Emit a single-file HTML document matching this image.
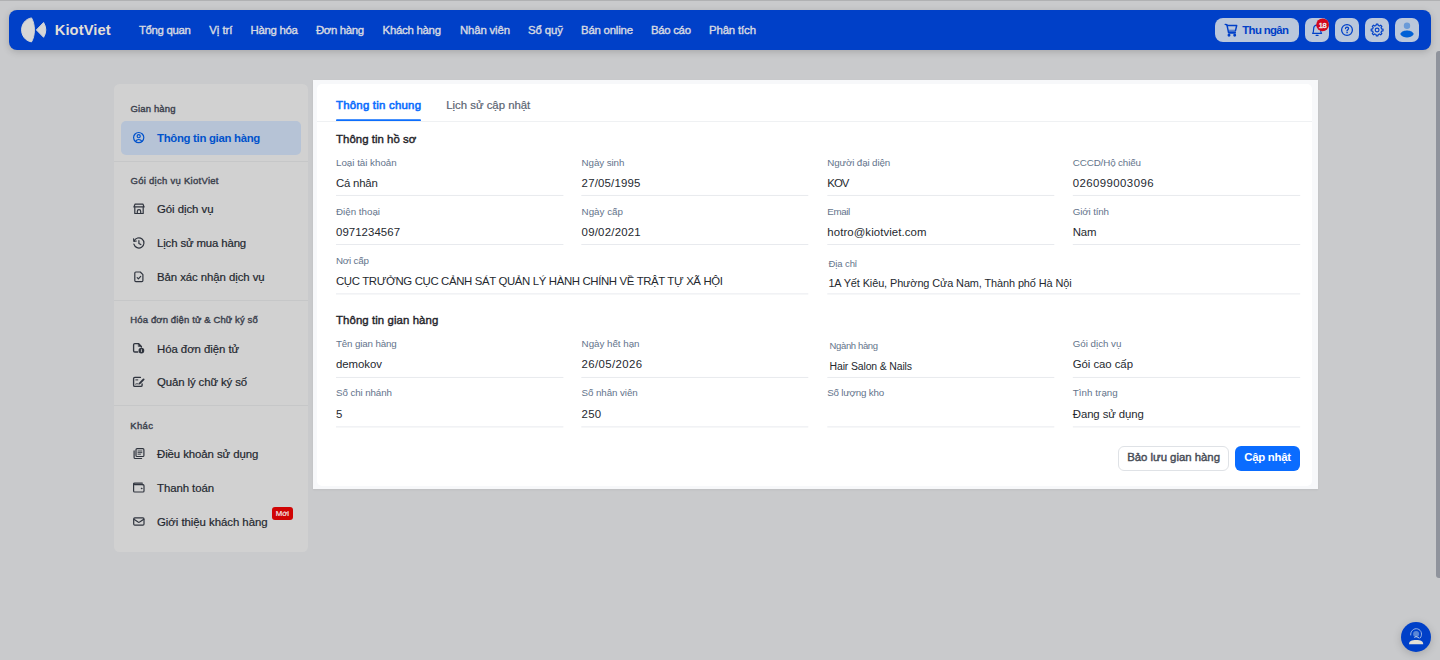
<!DOCTYPE html>
<html lang="vi"><head><meta charset="utf-8"><title>KiotViet - Thông tin gian hàng</title>
<style>
*{box-sizing:border-box;margin:0;padding:0}
html,body{width:1440px;height:660px;overflow:hidden}
body{position:relative;background:#c9cacc;font-family:"Liberation Sans",sans-serif}
.t{position:absolute;white-space:nowrap;line-height:1}
.abs{position:absolute;display:block}
.topline{left:0;top:0;width:1440px;height:1px;background:#b0b1b3}
.nav{left:9px;top:9.5px;width:1422px;height:40.5px;border-radius:8px;background:#0040c8;box-shadow:0 2px 7px rgba(0,0,0,.17)}
.nbtn{top:18px;height:24px;width:24px;border-radius:7px;background:#bac7db}
.side{left:114.4px;top:83.9px;width:193.3px;height:468.3px;border-radius:5.5px;background:#d1d1d1}
.sel{left:121px;top:121.3px;width:180.3px;height:33.6px;border-radius:5px;background:#b6c3d6}
.sdiv{left:114.4px;width:193.3px;height:1px;background:#c6c7c8}
.spot{left:312.5px;top:79.5px;width:1005.3px;height:409.5px;background:#f7f8fa;box-shadow:0 1px 2px rgba(0,0,0,.06)}
.card{left:317px;top:84px;width:995.4px;height:401.5px;border-radius:5px;background:#fff}
.tabline{left:317px;top:121px;width:995.4px;height:1px;background:#eff1f3}
.btn1{left:1117.8px;top:445.6px;width:111.2px;height:25px;border-radius:6px;border:1px solid #dfe2e6;background:#fff}
.btn2{left:1235.2px;top:445.6px;width:65px;height:25px;border-radius:6px;background:#0a6cff}
.sb{left:1436px;top:50.5px;width:5px;height:527px;border-radius:3px 0 0 3px;background:#8f939c}
.chat{left:1401px;top:621.5px;width:30px;height:30px;border-radius:50%;background:#0040c8;box-shadow:0 2px 8px rgba(0,0,0,.18)}
.moi{left:272.3px;top:507px;width:20.5px;height:12.8px;border-radius:3px;background:#d00404}
</style></head><body>
<div class="abs topline"></div>
<nav class="abs nav"></nav>
<svg class="abs" style="left:19px;top:15px" width="30" height="30" viewBox="19 15 30 30">
<path d="M31.5 17.9 C24.8 19.1 21.6 24.7 21.6 29.9 C21.6 35.1 24.8 40.7 31.5 41.9 C33.3 38.8 34.4 34.6 34.4 29.9 C34.4 25.2 33.3 21 31.5 17.9Z" fill="#d6d6d6" stroke="#d6d6d6" stroke-width="1" stroke-linejoin="round"/>
<path d="M36.4 29.9 L43.6 22.5 Q48 29.9 43.6 37.3Z" fill="#d6d6d6" stroke="#d6d6d6" stroke-width="1" stroke-linejoin="round"/>
</svg>
<div class="abs nbtn" style="left:1215px;width:83.8px;border-radius:8px"></div>
<div class="abs nbtn" style="left:1305px"></div>
<div class="abs nbtn" style="left:1335px"></div>
<div class="abs nbtn" style="left:1365px"></div>
<div class="abs nbtn" style="left:1395px"></div>

<aside class="abs side"></aside>
<div class="abs sel"></div>
<div class="abs sdiv" style="top:161px"></div>
<div class="abs sdiv" style="top:300.2px"></div>
<div class="abs sdiv" style="top:405.4px"></div>
<div class="abs moi"></div>
<div class="abs spot"></div>
<main class="abs card"></main>
<div class="abs tabline"></div>
<!--UL0--><svg class="abs" style="left:0;top:0" width="1440" height="660" viewBox="0 0 1440 660"><rect x="336.0" y="194.95" width="227.4" height="1" fill="#e8eaee"/><rect x="581.3" y="194.95" width="227.0" height="1" fill="#e8eaee"/><rect x="827.3" y="194.95" width="227.0" height="1" fill="#e8eaee"/><rect x="1072.8" y="194.95" width="227.4" height="1" fill="#e8eaee"/><rect x="336.0" y="244.00" width="227.4" height="1" fill="#e8eaee"/><rect x="581.3" y="244.00" width="227.0" height="1" fill="#e8eaee"/><rect x="827.3" y="244.00" width="227.0" height="1" fill="#e8eaee"/><rect x="1072.8" y="244.00" width="227.4" height="1" fill="#e8eaee"/><rect x="336.0" y="293.40" width="472.3" height="1" fill="#e8eaee"/><rect x="827.3" y="293.40" width="472.9" height="1" fill="#e8eaee"/><rect x="336.0" y="376.95" width="227.4" height="1" fill="#e8eaee"/><rect x="581.3" y="376.95" width="227.0" height="1" fill="#e8eaee"/><rect x="827.3" y="376.95" width="227.0" height="1" fill="#e8eaee"/><rect x="1072.8" y="376.95" width="227.4" height="1" fill="#e8eaee"/><rect x="336.0" y="426.40" width="227.4" height="1" fill="#e8eaee"/><rect x="581.3" y="426.40" width="227.0" height="1" fill="#e8eaee"/><rect x="827.3" y="426.40" width="227.0" height="1" fill="#e8eaee"/><rect x="1072.8" y="426.40" width="227.4" height="1" fill="#e8eaee"/><rect x="336" y="119.25" width="85" height="1.8" rx=".9" fill="#0d6efd"/></svg><!--UL1-->
<div class="abs btn1"></div>
<div class="abs btn2"></div>
<div class="abs sb"></div>
<div class="abs chat"></div>
<!--IC0--><svg class="abs" style="left:0;top:0" width="1440" height="660" viewBox="0 0 1440 660" fill="none" stroke-linecap="round" stroke-linejoin="round">
<defs><linearGradient id="cg" x1="0" y1="0" x2="0" y2="1"><stop offset="0" stop-color="#0040c8" stop-opacity=".35"/><stop offset="1" stop-color="#0040c8"/></linearGradient></defs>
<!-- cart -->
<g stroke="#0040c8" stroke-width="1.45">
<path d="M1225.2 24.4 L1226.9 24.7 L1228.6 32.8 L1235.3 32.8"/>
<path d="M1227.2 25.5 L1236.7 25.5 L1235.5 30.6"/>
<path d="M1228.1 29.4 L1236 29.4 L1235.5 33.4 L1228.9 33.4Z" fill="url(#cg)" stroke="none"/>
<circle cx="1229" cy="35.3" r=".75" fill="#0040c8"/><circle cx="1234.7" cy="35.3" r=".75" fill="#0040c8"/>
</g>
<!-- bell -->
<g stroke="#0040c8" stroke-width="1.2">
<path d="M1312.6 33.3 C1313.6 32.2 1313.6 30.6 1313.6 29.2 C1313.6 26.9 1315.2 25.2 1317.1 25.2 C1319 25.2 1320.6 26.9 1320.6 29.2 C1320.6 30.6 1320.6 32.2 1321.6 33.3Z"/>
<path d="M1316.1 35.3 L1318.1 35.3"/>
</g>
<circle cx="1322.6" cy="24.8" r="6.4" fill="#d4081c"/>
<!-- help -->
<g stroke="#0040c8" stroke-width="1.25">
<circle cx="1347" cy="30" r="5.4"/>
<path d="M1345.5 28.6 C1345.5 27.6 1346.2 27.1 1347 27.1 C1347.9 27.1 1348.6 27.7 1348.6 28.5 C1348.6 29.6 1347 29.7 1347 30.9"/>
<circle cx="1347" cy="32.7" r=".45" fill="#0040c8" stroke-width=".5"/>
</g>
<!-- gear -->
<g stroke="#0040c8" stroke-width="1.15">
<path d="M1376.03 25.53 L1376.25 24.06 L1377.95 24.06 L1378.17 25.53 L1379.50 26.08 L1380.70 25.20 L1381.90 26.40 L1381.02 27.60 L1381.57 28.93 L1383.04 29.15 L1383.04 30.85 L1381.57 31.07 L1381.02 32.40 L1381.90 33.60 L1380.70 34.80 L1379.50 33.92 L1378.17 34.47 L1377.95 35.94 L1376.25 35.94 L1376.03 34.47 L1374.70 33.92 L1373.50 34.80 L1372.30 33.60 L1373.18 32.40 L1372.63 31.07 L1371.16 30.85 L1371.16 29.15 L1372.63 28.93 L1373.18 27.60 L1372.30 26.40 L1373.50 25.20 L1374.70 26.08Z"/>
<circle cx="1377.1" cy="30" r="1.9"/>
</g>
<!-- avatar -->
<circle cx="1407" cy="25.7" r="3.2" fill="#6a9ad8"/>
<path d="M1400.2 34 C1401.8 30.9 1404.5 30.4 1407 30.4 C1409.5 30.4 1412.2 30.9 1413.8 34 C1412.2 36.9 1409.5 37.4 1407 37.4 C1404.5 37.4 1401.8 36.9 1400.2 34Z" fill="#0060d6"/>
<!-- sidebar: user circle -->
<g stroke="#0052cc" stroke-width="1.2">
<circle cx="138.7" cy="137.6" r="5.1"/>
<circle cx="138.7" cy="136.2" r="1.55"/>
<path d="M135.6 141.4 C136.4 139.9 137.5 139.5 138.7 139.5 C139.9 139.5 141 139.9 141.8 141.4"/>
</g>
<g stroke="#30353f" stroke-width="1.2">
<!-- store -->
<path d="M135.1 204.1 L142.9 204.1 L144.1 206.9 L133.9 206.9Z"/>
<path d="M134.8 207.4 L134.8 213.5 L143.2 213.5 L143.2 207.4"/>
<path d="M137.3 213.4 L137.3 211.4 A1.7 1.7 0 0 1 140.7 211.4 L140.7 213.4"/>
<!-- history -->
<g transform="translate(0 .6)"><path d="M134.1 240.4 A5.1 5.1 0 1 1 133.9 243.6"/>
<path d="M133.6 238.3 L133.9 240.7 L136.3 240.4"/>
<path d="M138.9 239.9 L138.9 242.8 L140.8 244"/></g>
<!-- doc check -->
<path d="M135.9 272 L140.3 272 L142.9 274.6 L142.9 280.5 C142.9 281.2 142.5 281.6 141.8 281.6 L135.9 281.6 C135.2 281.6 134.8 281.2 134.8 280.5 L134.8 273.1 C134.8 272.4 135.2 272 135.9 272Z"/>
<path d="M137.2 277.7 L138.4 278.9 L140.7 276.4"/>
<!-- invoice -->
<g stroke-width="1.35">
<path d="M137.8 352 L134.8 352 C134.1 352 133.6 351.5 133.6 350.8 L133.6 344.8 C133.6 344.1 134.1 343.6 134.8 343.6 L138.5 343.6 L141.4 346.4 L141.4 347"/>
<path d="M138.6 343.8 L141.2 346.4 L138.6 346.4Z" fill="#2b3039" stroke-width=".6"/>
<circle cx="141.4" cy="350.6" r="2.2" fill="#2b3039"/>
<path d="M141.4 349.6 L141.4 351.6" stroke="#c9c9c9" stroke-width=".9"/>
</g>
<!-- signature -->
<g stroke-width="1.35">
<path d="M142.1 384 L142.1 385.2 C142.1 385.9 141.6 386.4 140.9 386.4 L134.8 386.4 C134.1 386.4 133.6 385.9 133.6 385.2 L133.6 378.6 C133.6 377.9 134.1 377.4 134.8 377.4 L140.4 377.4"/>
<path d="M143.6 379.4 L140.2 382.8" stroke-width="1.9"/>
<path d="M139.9 383.1 L139 384 " stroke-width="1.2"/>
<path d="M135.8 379.9 L137.8 379.9 M135.6 384 C136.3 383.2 137 384.3 137.9 383.7" stroke-width="1"/>
</g>
<!-- terms -->
<path d="M137.1 448.7 L142.8 448.7 C143.5 448.7 143.9 449.1 143.9 449.8 L143.9 455.4 C143.9 456.1 143.5 456.5 142.8 456.5 L137.1 456.5 C136.4 456.5 136 456.1 136 455.4 L136 449.8 C136 449.1 136.4 448.7 137.1 448.7Z"/>
<path d="M138 451 L141.9 451 M138 452.6 L141.9 452.6 M138 454.2 L140.5 454.2" stroke-width=".9"/>
<path d="M134.1 450.9 L134.1 457.4 C134.1 458.1 134.5 458.5 135.2 458.5 L141.6 458.5"/>
<!-- wallet -->
<g transform="translate(0 .4)"><path d="M142.9 484.3 L134.8 484.3 C134.1 484.3 133.6 483.9 133.6 483.5 C133.6 483.1 134.1 482.8 134.8 482.8 L142.3 482.8"/>
<path d="M133.6 483.5 L133.6 490.5 C133.6 491.2 134 491.6 134.7 491.6 L142.9 491.6 C143.6 491.6 144 491.2 144 490.5 L144 485.4 C144 484.7 143.6 484.3 142.9 484.3"/>
<circle cx="141.6" cy="488" r=".5" fill="#2b3039" stroke-width=".5"/>
</g>
<!-- mail -->
<path d="M134.8 517.8 L142.9 517.8 C143.6 517.8 144 518.2 144 518.9 L144 524.1 C144 524.8 143.6 525.2 142.9 525.2 L134.8 525.2 C134.1 525.2 133.7 524.8 133.7 524.1 L133.7 518.9 C133.7 518.2 134.1 517.8 134.8 517.8Z"/>
<path d="M133.9 519.3 L138.1 522.1 C138.6 522.4 139.1 522.4 139.6 522.1 L143.8 519.3"/>
</g>
<!-- chat icon -->
<g transform="translate(1416.1 636.6)">
<path d="M-7.1 7.7 C-7.1 4.6 -4.6 3.4 0 3.4 C4.6 3.4 7.1 4.6 7.1 7.7Z" fill="#e4e0d6"/>
<circle cx="0" cy="-2.5" r="3" fill="#5a86d6"/>
<path d="M-5.4 -1.6 A5.5 5.5 0 1 1 4.2 1.2" stroke="#a9c0e8" stroke-width=".9"/>
<path d="M-1.4 0.7 C-.6 -.1 .8 -.1 1.6 .7 L3 1.4" stroke="#dfe3ea" stroke-width=".9"/>
</g>
</svg>
<!--IC1-->
<div class="t" style="left:54.70px;top:22.79px;font-size:14.72px;font-weight:700;color:#e2dfd7;letter-spacing:0.094px;">KiotViet</div>
<div class="t" style="left:138.90px;top:24.61px;font-size:11.40px;font-weight:400;color:#d6d9e2;letter-spacing:-0.321px;-webkit-text-stroke:0.4px;">Tổng quan</div>
<div class="t" style="left:209.30px;top:24.61px;font-size:11.40px;font-weight:400;color:#d6d9e2;letter-spacing:-0.064px;-webkit-text-stroke:0.4px;">Vị trí</div>
<div class="t" style="left:250.60px;top:24.61px;font-size:11.40px;font-weight:400;color:#d6d9e2;letter-spacing:-0.315px;-webkit-text-stroke:0.4px;">Hàng hóa</div>
<div class="t" style="left:316.00px;top:24.61px;font-size:11.40px;font-weight:400;color:#d6d9e2;letter-spacing:-0.364px;-webkit-text-stroke:0.4px;">Đơn hàng</div>
<div class="t" style="left:382.60px;top:24.61px;font-size:11.40px;font-weight:400;color:#d6d9e2;letter-spacing:-0.268px;-webkit-text-stroke:0.4px;">Khách hàng</div>
<div class="t" style="left:460.00px;top:24.61px;font-size:11.40px;font-weight:400;color:#d6d9e2;letter-spacing:-0.162px;-webkit-text-stroke:0.4px;">Nhân viên</div>
<div class="t" style="left:528.00px;top:24.61px;font-size:11.40px;font-weight:400;color:#d6d9e2;letter-spacing:-0.094px;-webkit-text-stroke:0.4px;">Sổ quỹ</div>
<div class="t" style="left:581.00px;top:24.61px;font-size:11.40px;font-weight:400;color:#d6d9e2;letter-spacing:-0.205px;-webkit-text-stroke:0.4px;">Bán online</div>
<div class="t" style="left:651.00px;top:24.61px;font-size:11.40px;font-weight:400;color:#d6d9e2;letter-spacing:-0.302px;-webkit-text-stroke:0.4px;">Báo cáo</div>
<div class="t" style="left:709.00px;top:24.61px;font-size:11.40px;font-weight:400;color:#d6d9e2;letter-spacing:-0.143px;-webkit-text-stroke:0.4px;">Phân tích</div>
<div class="t" style="left:1242.30px;top:25.11px;font-size:11.40px;font-weight:700;color:#0040c8;letter-spacing:-0.650px;">Thu ngân</div>
<div class="t" style="left:1318.70px;top:22.32px;font-size:7.50px;font-weight:400;color:#ececec;letter-spacing:-0.344px;-webkit-text-stroke:0.4px;">18</div>
<div class="t" style="left:130.50px;top:104.12px;font-size:9.50px;font-weight:400;color:#3c424e;letter-spacing:0.145px;-webkit-text-stroke:0.4px;">Gian hàng</div>
<div class="t" style="left:157.00px;top:133.11px;font-size:11.40px;font-weight:700;color:#0052cc;letter-spacing:-0.307px;">Thông tin gian hàng</div>
<div class="t" style="left:130.50px;top:176.03px;font-size:9.50px;font-weight:400;color:#3c424e;letter-spacing:0.277px;-webkit-text-stroke:0.4px;">Gói dịch vụ KiotViet</div>
<div class="t" style="left:157.00px;top:203.51px;font-size:11.40px;font-weight:400;color:#23272f;letter-spacing:-0.048px;-webkit-text-stroke:0.2px;">Gói dịch vụ</div>
<div class="t" style="left:157.00px;top:237.51px;font-size:11.40px;font-weight:400;color:#23272f;letter-spacing:-0.135px;-webkit-text-stroke:0.2px;">Lịch sử mua hàng</div>
<div class="t" style="left:157.00px;top:271.51px;font-size:11.40px;font-weight:400;color:#23272f;letter-spacing:-0.064px;-webkit-text-stroke:0.2px;">Bản xác nhận dịch vụ</div>
<div class="t" style="left:130.30px;top:315.23px;font-size:9.50px;font-weight:400;color:#3c424e;letter-spacing:0.133px;-webkit-text-stroke:0.4px;">Hóa đơn điện tử &amp; Chữ ký số</div>
<div class="t" style="left:157.00px;top:344.01px;font-size:11.40px;font-weight:400;color:#23272f;letter-spacing:-0.047px;-webkit-text-stroke:0.2px;">Hóa đơn điện tử</div>
<div class="t" style="left:157.00px;top:376.51px;font-size:11.40px;font-weight:400;color:#23272f;letter-spacing:-0.102px;-webkit-text-stroke:0.2px;">Quản lý chữ ký số</div>
<div class="t" style="left:130.30px;top:420.83px;font-size:9.50px;font-weight:400;color:#3c424e;letter-spacing:0.348px;-webkit-text-stroke:0.4px;">Khác</div>
<div class="t" style="left:157.00px;top:448.71px;font-size:11.40px;font-weight:400;color:#23272f;letter-spacing:-0.078px;-webkit-text-stroke:0.2px;">Điều khoản sử dụng</div>
<div class="t" style="left:157.00px;top:482.51px;font-size:11.40px;font-weight:400;color:#23272f;letter-spacing:-0.060px;-webkit-text-stroke:0.2px;">Thanh toán</div>
<div class="t" style="left:157.00px;top:516.51px;font-size:11.40px;font-weight:400;color:#23272f;letter-spacing:-0.036px;-webkit-text-stroke:0.2px;">Giới thiệu khách hàng</div>
<div class="t" style="left:275.80px;top:510.38px;font-size:7.79px;font-weight:400;color:#f0e6e6;letter-spacing:-0.064px;-webkit-text-stroke:0.2px;">Mới</div>
<div class="t" style="left:336.00px;top:100.01px;font-size:11.40px;font-weight:400;color:#0d6efd;letter-spacing:0.235px;-webkit-text-stroke:0.6px;">Thông tin chung</div>
<div class="t" style="left:446.20px;top:100.01px;font-size:11.40px;font-weight:400;color:#5b6472;letter-spacing:-0.010px;-webkit-text-stroke:0.2px;">Lịch sử cập nhật</div>
<div class="t" style="left:336.00px;top:133.91px;font-size:11.40px;font-weight:400;color:#1f2329;letter-spacing:0.045px;-webkit-text-stroke:0.4px;">Thông tin hồ sơ</div>
<div class="t" style="left:336.00px;top:158.48px;font-size:9.79px;font-weight:400;color:#64748b;letter-spacing:-0.017px;">Loại tài khoản</div>
<div class="t" style="left:336.00px;top:178.31px;font-size:11.40px;font-weight:400;color:#25292f;letter-spacing:-0.213px;">Cá nhân</div>
<div class="t" style="left:581.60px;top:158.48px;font-size:9.79px;font-weight:400;color:#64748b;letter-spacing:-0.088px;">Ngày sinh</div>
<div class="t" style="left:581.60px;top:178.31px;font-size:11.40px;font-weight:400;color:#25292f;letter-spacing:0.198px;">27/05/1995</div>
<div class="t" style="left:827.30px;top:158.48px;font-size:9.79px;font-weight:400;color:#64748b;letter-spacing:-0.133px;">Người đại diện</div>
<div class="t" style="left:827.30px;top:178.31px;font-size:11.40px;font-weight:400;color:#25292f;letter-spacing:-1.000px;">KOV</div>
<div class="t" style="left:1072.80px;top:158.48px;font-size:9.79px;font-weight:400;color:#64748b;letter-spacing:-0.115px;">CCCD/Hộ chiếu</div>
<div class="t" style="left:1072.80px;top:178.31px;font-size:11.40px;font-weight:400;color:#25292f;letter-spacing:0.424px;">026099003096</div>
<div class="t" style="left:336.00px;top:207.48px;font-size:9.79px;font-weight:400;color:#64748b;letter-spacing:-0.005px;">Điện thoại</div>
<div class="t" style="left:336.00px;top:227.31px;font-size:11.40px;font-weight:400;color:#25292f;letter-spacing:0.071px;">0971234567</div>
<div class="t" style="left:581.60px;top:207.48px;font-size:9.79px;font-weight:400;color:#64748b;letter-spacing:0.010px;">Ngày cấp</div>
<div class="t" style="left:581.60px;top:227.31px;font-size:11.40px;font-weight:400;color:#25292f;letter-spacing:0.232px;">09/02/2021</div>
<div class="t" style="left:827.30px;top:207.48px;font-size:9.79px;font-weight:400;color:#64748b;letter-spacing:-0.392px;">Email</div>
<div class="t" style="left:827.30px;top:227.31px;font-size:11.40px;font-weight:400;color:#25292f;letter-spacing:0.090px;">hotro@kiotviet.com</div>
<div class="t" style="left:1072.80px;top:207.48px;font-size:9.79px;font-weight:400;color:#64748b;letter-spacing:-0.151px;">Giới tính</div>
<div class="t" style="left:1072.80px;top:227.31px;font-size:11.40px;font-weight:400;color:#25292f;letter-spacing:-0.231px;">Nam</div>
<div class="t" style="left:336.00px;top:255.68px;font-size:9.79px;font-weight:400;color:#64748b;letter-spacing:-0.190px;">Nơi cấp</div>
<div class="t" style="left:336.00px;top:276.31px;font-size:11.40px;font-weight:400;color:#25292f;letter-spacing:-0.355px;">CỤC TRƯỞNG CỤC CẢNH SÁT QUẢN LÝ HÀNH CHÍNH VỀ TRẬT TỰ XÃ HỘI</div>
<div class="t" style="left:828.40px;top:258.53px;font-size:9.50px;font-weight:400;color:#64748b;letter-spacing:-0.074px;">Địa chỉ</div>
<div class="t" style="left:828.40px;top:277.72px;font-size:10.92px;font-weight:400;color:#25292f;letter-spacing:-0.098px;">1A Yết Kiêu, Phường Cửa Nam, Thành phố Hà Nội</div>
<div class="t" style="left:336.00px;top:315.31px;font-size:11.40px;font-weight:400;color:#1f2329;letter-spacing:0.089px;-webkit-text-stroke:0.4px;">Thông tin gian hàng</div>
<div class="t" style="left:336.00px;top:338.88px;font-size:9.79px;font-weight:400;color:#64748b;letter-spacing:-0.146px;">Tên gian hàng</div>
<div class="t" style="left:336.00px;top:358.71px;font-size:11.40px;font-weight:400;color:#25292f;letter-spacing:-0.039px;">demokov</div>
<div class="t" style="left:581.60px;top:338.88px;font-size:9.79px;font-weight:400;color:#64748b;letter-spacing:-0.026px;">Ngày hết hạn</div>
<div class="t" style="left:581.60px;top:358.71px;font-size:11.40px;font-weight:400;color:#25292f;letter-spacing:0.376px;">26/05/2026</div>
<div class="t" style="left:829.60px;top:340.93px;font-size:9.50px;font-weight:400;color:#64748b;letter-spacing:-0.376px;">Ngành hàng</div>
<div class="t" style="left:829.60px;top:361.82px;font-size:10.45px;font-weight:400;color:#25292f;letter-spacing:-0.135px;">Hair Salon &amp; Nails</div>
<div class="t" style="left:1072.80px;top:338.88px;font-size:9.79px;font-weight:400;color:#64748b;letter-spacing:-0.034px;">Gói dịch vụ</div>
<div class="t" style="left:1072.80px;top:358.71px;font-size:11.40px;font-weight:400;color:#25292f;letter-spacing:-0.060px;">Gói cao cấp</div>
<div class="t" style="left:336.00px;top:387.68px;font-size:9.79px;font-weight:400;color:#64748b;letter-spacing:-0.101px;">Số chi nhánh</div>
<div class="t" style="left:336.00px;top:409.21px;font-size:11.40px;font-weight:400;color:#25292f;letter-spacing:0.000px;">5</div>
<div class="t" style="left:581.60px;top:387.68px;font-size:9.79px;font-weight:400;color:#64748b;letter-spacing:-0.092px;">Số nhân viên</div>
<div class="t" style="left:581.60px;top:409.21px;font-size:11.40px;font-weight:400;color:#25292f;letter-spacing:0.292px;">250</div>
<div class="t" style="left:827.30px;top:387.68px;font-size:9.79px;font-weight:400;color:#64748b;letter-spacing:-0.217px;">Số lượng kho</div>
<div class="t" style="left:1072.80px;top:387.68px;font-size:9.79px;font-weight:400;color:#64748b;letter-spacing:0.045px;">Tình trạng</div>
<div class="t" style="left:1072.80px;top:409.21px;font-size:11.40px;font-weight:400;color:#25292f;letter-spacing:-0.112px;">Đang sử dụng</div>
<div class="t" style="left:1127.20px;top:451.51px;font-size:11.40px;font-weight:400;color:#454a54;letter-spacing:-0.021px;-webkit-text-stroke:0.4px;">Bảo lưu gian hàng</div>
<div class="t" style="left:1244.20px;top:451.51px;font-size:11.40px;font-weight:700;color:#ffffff;letter-spacing:-0.276px;">Cập nhật</div>
</body></html>
